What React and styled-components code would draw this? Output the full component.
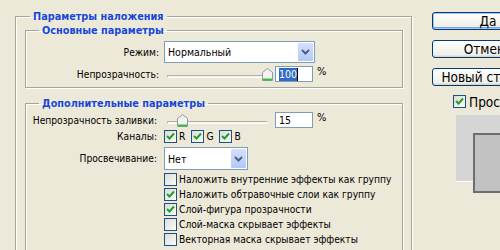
import React from 'react';
import styled, { createGlobalStyle } from 'styled-components';

const GlobalStyle = createGlobalStyle`
  html, body {
    margin: 0;
    padding: 0;
    background: #ece9d8;
    overflow: hidden;
  }
  body {
    font-family: 'DejaVu Sans Condensed', 'Liberation Sans', Arial, sans-serif;
    font-size: 10.2px;
    color: #000;
  }
`;

const Page = styled.div`
  display: flex;
  align-items: flex-start;
  width: 500px;
  height: 250px;
  padding: 10px 0 0 15px;
  box-sizing: border-box;
  overflow: hidden;
`;

const Group = styled.fieldset`
  flex: none;
  margin: ${p => p.$mt || 0}px 0 0 0;
  padding: ${p => p.$pad};
  width: ${p => p.$w}px;
  box-sizing: border-box;
  border: 1px solid #a7a696;
  box-shadow: inset 1px 1px 0 #fff, 1px 1px 0 #fff;
  min-width: 0;
  min-height: ${p => p.$minH || 0}px;
`;

const Legend = styled.legend`
  margin-left: ${p => p.$ml}px;
  padding: 0 ${p => p.$px}px;
  font-weight: bold;
  font-size: 10.8px;
  line-height: 13px;
  color: #1847d8;
`;

const Row = styled.div`
  display: grid;
  grid-template-columns: ${p => p.$label}px auto;
  column-gap: ${p => p.$gap || 5}px;
  align-items: center;
  margin-top: ${p => p.$mt || 0}px;
`;

const Label = styled.div`
  text-align: right;
  white-space: nowrap;
`;

const Controls = styled.div`
  display: flex;
  align-items: center;
  gap: ${p => p.$gap || 0}px;
`;

const Select = styled.div`
  display: flex;
  align-items: center;
  justify-content: space-between;
  width: ${p => p.$w}px;
  height: ${p => p.$h}px;
  box-sizing: border-box;
  border: 1px solid #7f9db9;
  background: #fff;
  padding: 1px 1px 1px 3px;
`;

const SelectText = styled.span`
  font-size: 10.5px;
`;

const SelectButton = styled.div`
  width: 15px;
  height: 100%;
  display: flex;
  align-items: center;
  justify-content: center;
  background: linear-gradient(#d3e0fd, #b4c8f6);
  border-radius: 1px;
`;

const SliderBox = styled.div`
  position: relative;
  width: 108px;
  height: 16px;
`;

const Groove = styled.div`
  position: absolute;
  left: 3px;
  right: 4px;
  top: 9px;
  height: 3px;
  box-sizing: border-box;
  border: 1px solid #b0b0a4;
  border-bottom-color: #fff;
  border-right-color: #fff;
  background: #f4f3ee;
  border-radius: 2px;
`;

const Thumb = styled.svg`
  position: absolute;
  top: 2px;
`;

const NumField = styled.div`
  width: 38px;
  height: 16px;
  box-sizing: border-box;
  border: 1px solid #7f9db9;
  background: #fff;
  display: flex;
  align-items: center;
  padding-left: 3px;
  margin-left: 3px;
  font-size: 10.5px;
`;

const Selected = styled.span`
  background: #316ac5;
  color: #fff;
  line-height: 13px;
  border-right: 1px solid #000;
`;

const Percent = styled.span`
  margin-left: 4px;
  align-self: flex-start;
  margin-top: -1px;
  font-size: 11px;
`;

const CheckRow = styled.label`
  display: flex;
  align-items: center;
  height: ${p => p.$h || 15}px;
  gap: 2px;
  white-space: nowrap;
`;

const Box = styled.span`
  width: 13px;
  height: 13px;
  box-sizing: border-box;
  border: 1px solid #1c5180;
  background: linear-gradient(135deg, #dcdcd7, #fbfbf9);
  display: flex;
  align-items: center;
  justify-content: center;
  flex: none;
`;

const CheckList = styled.div`
  display: flex;
  flex-direction: column;
`;

const Side = styled.div`
  flex: none;
  margin-left: 20px;
  display: flex;
  flex-direction: column;
  padding-top: 2px;
`;

const Button = styled.div`
  width: 112px;
  height: 18px;
  box-sizing: border-box;
  border: 1px solid #003c74;
  border-radius: 3px;
  background: linear-gradient(#fefefe, #f0f0ea 85%, #d6d0c5);
  box-shadow: ${p => (p.$default ? 'inset 0 0 0 1px #a8c4f5, inset 0 -1px 0 1px #7ba2e7' : 'none')};
  display: flex;
  align-items: center;
  justify-content: center;
  font-size: 13.5px;
  margin-bottom: 10px;
  white-space: nowrap;
  overflow: hidden;
`;

const PreviewCheck = styled(CheckRow)`
  margin: -2px 0 0 21px;
  font-size: 13.5px;
  gap: 3px;
`;

const Preview = styled.div`
  margin: 6px 0 0 24px;
  width: 90px;
  height: 67px;
  background: #d6d6d6;
  border-bottom: 1px solid #fff;
  padding: 18px 0 0 17px;
  box-sizing: border-box;
`;

const Swatch = styled.div`
  width: 60px;
  height: 60px;
  border: 2px solid #6e6e6e;
  background: #c2c2c2;
  box-sizing: border-box;
`;

const Check = () => (
  <svg width="9" height="9" viewBox="0 0 9 9">
    <path d="M1 4 L3.5 6.5 L8 1.5" fill="none" stroke="#21a121" strokeWidth="2" />
  </svg>
);

const Checkbox = ({ checked, children, h }) => (
  <CheckRow $h={h}>
    <Box>{checked && <Check />}</Box>
    <span>{children}</span>
  </CheckRow>
);

const Chevron = () => (
  <svg width="9" height="6" viewBox="0 0 9 6">
    <path d="M1 1 L4.5 4.5 L8 1" fill="none" stroke="#4d6185" strokeWidth="2" />
  </svg>
);

const Slider = ({ pos }) => (
  <SliderBox>
    <Groove />
    <Thumb width="11" height="13" viewBox="0 0 11 13" style={{ left: pos }}>
      <path d="M0.5 4.5 L5.5 0.5 L10.5 4.5 L10.5 12.5 L0.5 12.5 Z" fill="#f3f3ef" stroke="#8e9ba6" />
      <path d="M1 11.5 L10 11.5" stroke="#3cba3c" strokeWidth="2" />
    </Thumb>
  </SliderBox>
);

const App = () => (
  <>
    <GlobalStyle />
    <Page>
      <Group $w={397} $pad="1px 8px 0 9px" $minH={260}>
        <Legend $ml={5} $px={3}>Параметры наложения</Legend>
        <Group $w={378} $pad="4px 0 5px 0">
          <Legend $ml={13} $px={3}>Основные параметры</Legend>
          <Row $label={133}>
            <Label>Режим:</Label>
            <Select $w={151} $h={22}>
              <SelectText>Нормальный</SelectText>
              <SelectButton><Chevron /></SelectButton>
            </Select>
          </Row>
          <Row $label={133} $mt={3}>
            <Label>Непрозрачность:</Label>
            <Controls>
              <Slider pos={98} />
              <NumField><Selected>100</Selected></NumField>
              <Percent>%</Percent>
            </Controls>
          </Row>
        </Group>
        <Group $w={378} $mt={9} $pad="2px 0 5px 0" $minH={160}>
          <Legend $ml={13} $px={3}>Дополнительные параметры</Legend>
          <Row $label={131} $gap={7}>
            <Label>Непрозрачность заливки:</Label>
            <Controls>
              <Slider pos={13} />
              <NumField>15</NumField>
              <Percent>%</Percent>
            </Controls>
          </Row>
          <Row $label={131} $gap={7} $mt={2}>
            <Label>Каналы:</Label>
            <Controls $gap={6}>
              <Checkbox checked h={13}>R</Checkbox>
              <Checkbox checked h={13}>G</Checkbox>
              <Checkbox checked h={13}>B</Checkbox>
            </Controls>
          </Row>
          <Row $label={131} $gap={7} $mt={4}>
            <Label>Просвечивание:</Label>
            <Select $w={84} $h={23}>
              <SelectText>Нет</SelectText>
              <SelectButton><Chevron /></SelectButton>
            </Select>
          </Row>
          <Row $label={131} $gap={7} $mt={2}>
            <span />
            <CheckList>
              <Checkbox>Наложить внутренние эффекты как группу</Checkbox>
              <Checkbox checked>Наложить обтравочные слои как группу</Checkbox>
              <Checkbox checked>Слой-фигура прозрачности</Checkbox>
              <Checkbox>Слой-маска скрывает эффекты</Checkbox>
              <Checkbox>Векторная маска скрывает эффекты</Checkbox>
            </CheckList>
          </Row>
        </Group>
      </Group>
      <Side>
        <Button $default>Да</Button>
        <Button>Отмена</Button>
        <Button>Новый стиль...</Button>
        <PreviewCheck>
          <Box><Check /></Box>
          <span>Просмотр</span>
        </PreviewCheck>
        <Preview>
          <Swatch />
        </Preview>
      </Side>
    </Page>
  </>
);

export default App;
